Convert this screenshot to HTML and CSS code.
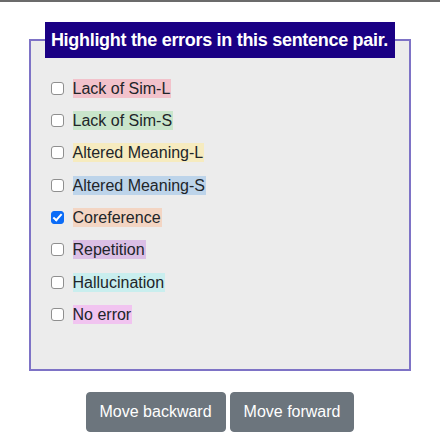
FILE: index.html
```html
<!DOCTYPE html>
<html>
<head>
<meta charset="utf-8">
<link rel="stylesheet" href="styles.css">
</head>
<body>
<div class="topline"></div>
<main class="page">
  <fieldset class="panel">
    <legend class="panel-title">Highlight the errors in this sentence pair.</legend>
    <div class="options">
      <label class="option"><input type="checkbox" class="box"><span class="tag tag-siml">Lack of Sim-L</span></label>
      <label class="option"><input type="checkbox" class="box"><span class="tag tag-sims">Lack of Sim-S</span></label>
      <label class="option"><input type="checkbox" class="box"><span class="tag tag-aml">Altered Meaning-L</span></label>
      <label class="option"><input type="checkbox" class="box"><span class="tag tag-ams">Altered Meaning-S</span></label>
      <label class="option"><input type="checkbox" class="box" checked><span class="tag tag-coref">Coreference</span></label>
      <label class="option"><input type="checkbox" class="box"><span class="tag tag-rep">Repetition</span></label>
      <label class="option"><input type="checkbox" class="box"><span class="tag tag-hall">Hallucination</span></label>
      <label class="option"><input type="checkbox" class="box"><span class="tag tag-none">No error</span></label>
    </div>
  </fieldset>
  <div class="actions">
    <button class="btn">Move backward</button>
    <button class="btn">Move forward</button>
  </div>
</main>
</body>
</html>
```
FILE: styles.css
```css
* { box-sizing: border-box; }
html, body { margin: 0; padding: 0; background: #fff; }
body {
  font-family: "Liberation Sans", Arial, sans-serif;
  font-size: 16px;
  color: #212529;
  width: 440px;
  height: 432px;
  overflow: hidden;
}
.topline {
  height: 2px;
  background: #6b6b6b;
}
.page {
  display: flex;
  flex-direction: column;
  align-items: center;
  padding-top: 20px;
}
.panel {
  width: 382px;
  min-width: 0;
  margin: 0;
  margin-left: -1px;
  padding: 14px 20px 38px 20px;
  background: #ececec;
  border: 2px solid #7e73c6;
}
.panel-title {
  margin-left: -6px;
  padding: 0;
  width: 350px;
  height: 36px;
  line-height: 36px;
  text-align: center;
  white-space: nowrap;
  background: #1a0084;
  color: #fff;
  font-weight: bold;
  font-size: 18px;
  letter-spacing: -0.3px;
}
.options {
  display: flex;
  flex-direction: column;
}
.option {
  display: flex;
  align-items: center;
  height: 32.33px;
}
.box {
  appearance: none;
  -webkit-appearance: none;
  position: relative;
  width: 13px;
  height: 13px;
  margin: 0 9px 0 0;
  background: #fff;
  border: 1px solid #8f8f8f;
  border-radius: 3px;
  flex: none;
}
.box:checked {
  background: #0b6cf7;
  border-color: #0b6cf7;
}
.box:checked::after {
  content: "";
  position: absolute;
  left: 3.5px;
  top: 0.5px;
  width: 3px;
  height: 7px;
  border: solid #fff;
  border-width: 0 2px 2px 0;
  transform: rotate(42deg);
}
.tag {
  line-height: 19px;
  padding: 0 1px 0 0;
}
.tag-siml { background: #f2c2cb; }
.tag-sims { background: #c9e5cb; }
.tag-aml { background: #f6ebbf; }
.tag-ams { background: #bdd4ea; }
.tag-coref { background: #f3d5c3; }
.tag-rep { background: #dbbfe5; }
.tag-hall { background: #c9eeee; }
.tag-none { background: #f1c4f0; }
.actions {
  display: flex;
  gap: 4px;
  margin-top: 21px;
}
.btn {
  font-family: inherit;
  font-size: 16px;
  line-height: 24px;
  padding: 7px 13px;
  color: #fff;
  background: #6c757d;
  border: 1px solid #6c757d;
  border-radius: 4px;
}
```
